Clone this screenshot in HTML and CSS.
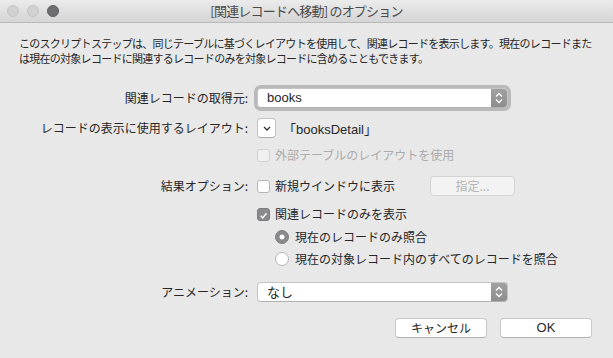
FILE: index.html
```html
<!DOCTYPE html>
<html lang="ja">
<head>
<meta charset="utf-8">
<link rel="stylesheet" href="styles.css">
</head>
<body>
<div class="window">
  <div class="titlebar">
    <div class="lights">
      <span class="light"></span>
      <span class="light"></span>
      <span class="light dark"></span>
    </div>
    <div class="title">[関連レコードへ移動] のオプション</div>
  </div>
  <div class="content">
    <p class="desc">このスクリプトステップは、同じテーブルに基づくレイアウトを使用して、関連レコードを表示します。現在のレコードまたは現在の対象レコードに関連するレコードのみを対象レコードに含めることもできます。</p>

    <div class="row r1">
      <div class="lbl">関連レコードの取得元:</div>
      <div class="ctl">
        <div class="popup focus">
          <span class="popup-text latin">books</span>
          <span class="stepper"><svg width="16" height="20" viewBox="0 0 16 20"><path d="M5 8.5l3-3 3 3M5 11.5l3 3 3-3" fill="none" stroke="#fff" stroke-width="1.3"/></svg></span>
        </div>
      </div>
    </div>

    <div class="row r2">
      <div class="lbl">レコードの表示に使用するレイアウト:</div>
      <div class="ctl">
        <span class="mini-btn"><svg width="8" height="5" viewBox="0 0 8 5"><path d="M1 1l3 3 3-3" fill="none" stroke="#333" stroke-width="1.3"/></svg></span>
        <span class="layout-name latin">「booksDetail」</span>
      </div>
    </div>

    <div class="row r3">
      <div class="lbl"></div>
      <div class="ctl">
        <span class="check disabled"></span>
        <span class="opt disabled-text">外部テーブルのレイアウトを使用</span>
      </div>
    </div>

    <div class="row r4">
      <div class="lbl">結果オプション:</div>
      <div class="ctl">
        <span class="check"></span>
        <span class="opt">新規ウインドウに表示</span>
        <span class="btn small disabled-btn">指定...</span>
      </div>
    </div>

    <div class="row r5">
      <div class="lbl"></div>
      <div class="ctl">
        <span class="check checked"><svg width="13" height="13" viewBox="0 0 13 13"><path d="M3.2 6.8l2.4 2.6L10 3.8" fill="none" stroke="#fff" stroke-width="1.6"/></svg></span>
        <span class="opt">関連レコードのみを表示</span>
      </div>
    </div>

    <div class="row r6">
      <div class="lbl"></div>
      <div class="ctl indent">
        <span class="radio on"></span>
        <span class="opt ropt">現在のレコードのみ照合</span>
      </div>
    </div>

    <div class="row r7">
      <div class="lbl"></div>
      <div class="ctl indent">
        <span class="radio"></span>
        <span class="opt ropt">現在の対象レコード内のすべてのレコードを照合</span>
      </div>
    </div>

    <div class="row r8">
      <div class="lbl">アニメーション:</div>
      <div class="ctl">
        <div class="popup">
          <span class="popup-text">なし</span>
          <span class="stepper"><svg width="16" height="20" viewBox="0 0 16 20"><path d="M5 8.5l3-3 3 3M5 11.5l3 3 3-3" fill="none" stroke="#fff" stroke-width="1.3"/></svg></span>
        </div>
      </div>
    </div>

    <div class="buttons">
      <span class="btn">キャンセル</span>
      <span class="btn latin">OK</span>
    </div>
  </div>
</div>
</body>
</html>
```

FILE: styles.css
```css
html, body {
  margin: 0;
  padding: 0;
}
body {
  width: 613px;
  height: 358px;
  overflow: hidden;
  background: #e8e8e8;
  font-family: "Noto Sans CJK JP", "Liberation Sans", sans-serif;
  color: #262626;
}
.latin {
  font-family: "Liberation Sans", "Noto Sans CJK JP", sans-serif;
}
.window {
  width: 613px;
  height: 358px;
  display: flex;
  flex-direction: column;
}
.titlebar {
  height: 22px;
  flex: none;
  position: relative;
  background: linear-gradient(#ebebeb, #d5d5d5);
  border-bottom: 1px solid #b9b9b9;
  display: flex;
  align-items: center;
  justify-content: center;
}
.lights {
  position: absolute;
  left: 7px;
  top: 5px;
  display: flex;
  gap: 8px;
}
.light {
  width: 12px;
  height: 12px;
  border-radius: 50%;
  box-sizing: border-box;
  background: #d1d1d1;
  border: 1px solid #c3c3c3;
}
.light.dark {
  background: #6e6e70;
  border-color: #5f5f61;
}
.title {
  font-size: 13px;
  letter-spacing: -0.8px;
  color: #4a4a4a;
  line-height: 22px;
}
.content {
  flex: 1;
  display: flex;
  flex-direction: column;
}
.desc {
  margin: 13px 0 0 19px;
  width: 580px;
  font-size: 11px;
  letter-spacing: -0.73px;
  line-height: 15px;
}
.row {
  display: flex;
  align-items: center;
  height: 20px;
}
.r1 { margin-top: 22px; }
.r2 { margin-top: 10px; }
.r3 { margin-top: 7px; }
.r4 { margin-top: 11px; }
.r5 { margin-top: 8px; }
.r6 { margin-top: 3px; }
.r7 { margin-top: 2px; }
.r8 { margin-top: 13px; }
.lbl {
  width: 248px;
  flex: none;
  text-align: right;
  font-size: 12px;
  line-height: 20px;
}
.ctl {
  margin-left: 9px;
  display: flex;
  align-items: center;
  height: 20px;
}
.ctl.indent {
  margin-left: 27px;
}
.popup {
  width: 251px;
  height: 20px;
  box-sizing: border-box;
  background: #fff;
  border: 1px solid #c4c4c4;
  border-bottom-color: #b0b0b0;
  border-radius: 4px;
  display: flex;
  align-items: center;
  overflow: hidden;
}
.popup.focus {
  box-shadow: 0 0 0 3px #b9b9b9;
}
.popup-text {
  flex: 1;
  padding-left: 9px;
  font-size: 13px;
  line-height: 18px;
}
.stepper {
  width: 16px;
  height: 20px;
  flex: none;
  background: linear-gradient(#a2a2a2, #8c8c8c);
  display: flex;
}
.mini-btn {
  width: 19px;
  height: 20px;
  box-sizing: border-box;
  background: #fff;
  border: 1px solid #c4c4c4;
  border-bottom-color: #acacac;
  border-radius: 4px;
  display: flex;
  align-items: center;
  justify-content: center;
}
.layout-name {
  margin-left: 7px;
  font-size: 13px;
}
.check {
  width: 13px;
  height: 13px;
  box-sizing: border-box;
  flex: none;
  background: #fff;
  border: 1px solid #b4b4b4;
  border-radius: 3px;
  display: flex;
}
.check.disabled {
  background: #f0f0f0;
  border-color: #d2d2d2;
}
.check.checked {
  background: #8a8a8c;
  border-color: #7c7c7e;
}
.opt {
  margin-left: 5px;
  font-size: 12px;
  line-height: 20px;
  white-space: nowrap;
}
.ropt {
  margin-left: 6px;
}
.disabled-text {
  color: #ababab;
}
.radio {
  width: 14px;
  height: 14px;
  box-sizing: border-box;
  flex: none;
  border-radius: 50%;
  background: #fff;
  border: 1px solid #b4b4b4;
}
.radio.on {
  background: radial-gradient(circle, #fff 0 2.2px, #8a8a8c 2.8px);
  border-color: #7c7c7e;
}
.btn {
  width: 92px;
  height: 20px;
  box-sizing: border-box;
  background: #fff;
  border: 1px solid #c8c8c8;
  border-bottom-color: #b0b0b0;
  border-radius: 4px;
  font-size: 12px;
  line-height: 18px;
  text-align: center;
  display: inline-block;
}
.btn.latin {
  font-size: 13px;
}
.btn.small {
  width: 85px;
  margin-left: 35px;
}
.disabled-btn {
  background: #f3f3f3;
  border-color: #d3d3d3;
  color: #b5b5b5;
}
.buttons {
  margin-top: 16px;
  display: flex;
  justify-content: flex-end;
  gap: 13px;
  padding-right: 21px;
}
```
